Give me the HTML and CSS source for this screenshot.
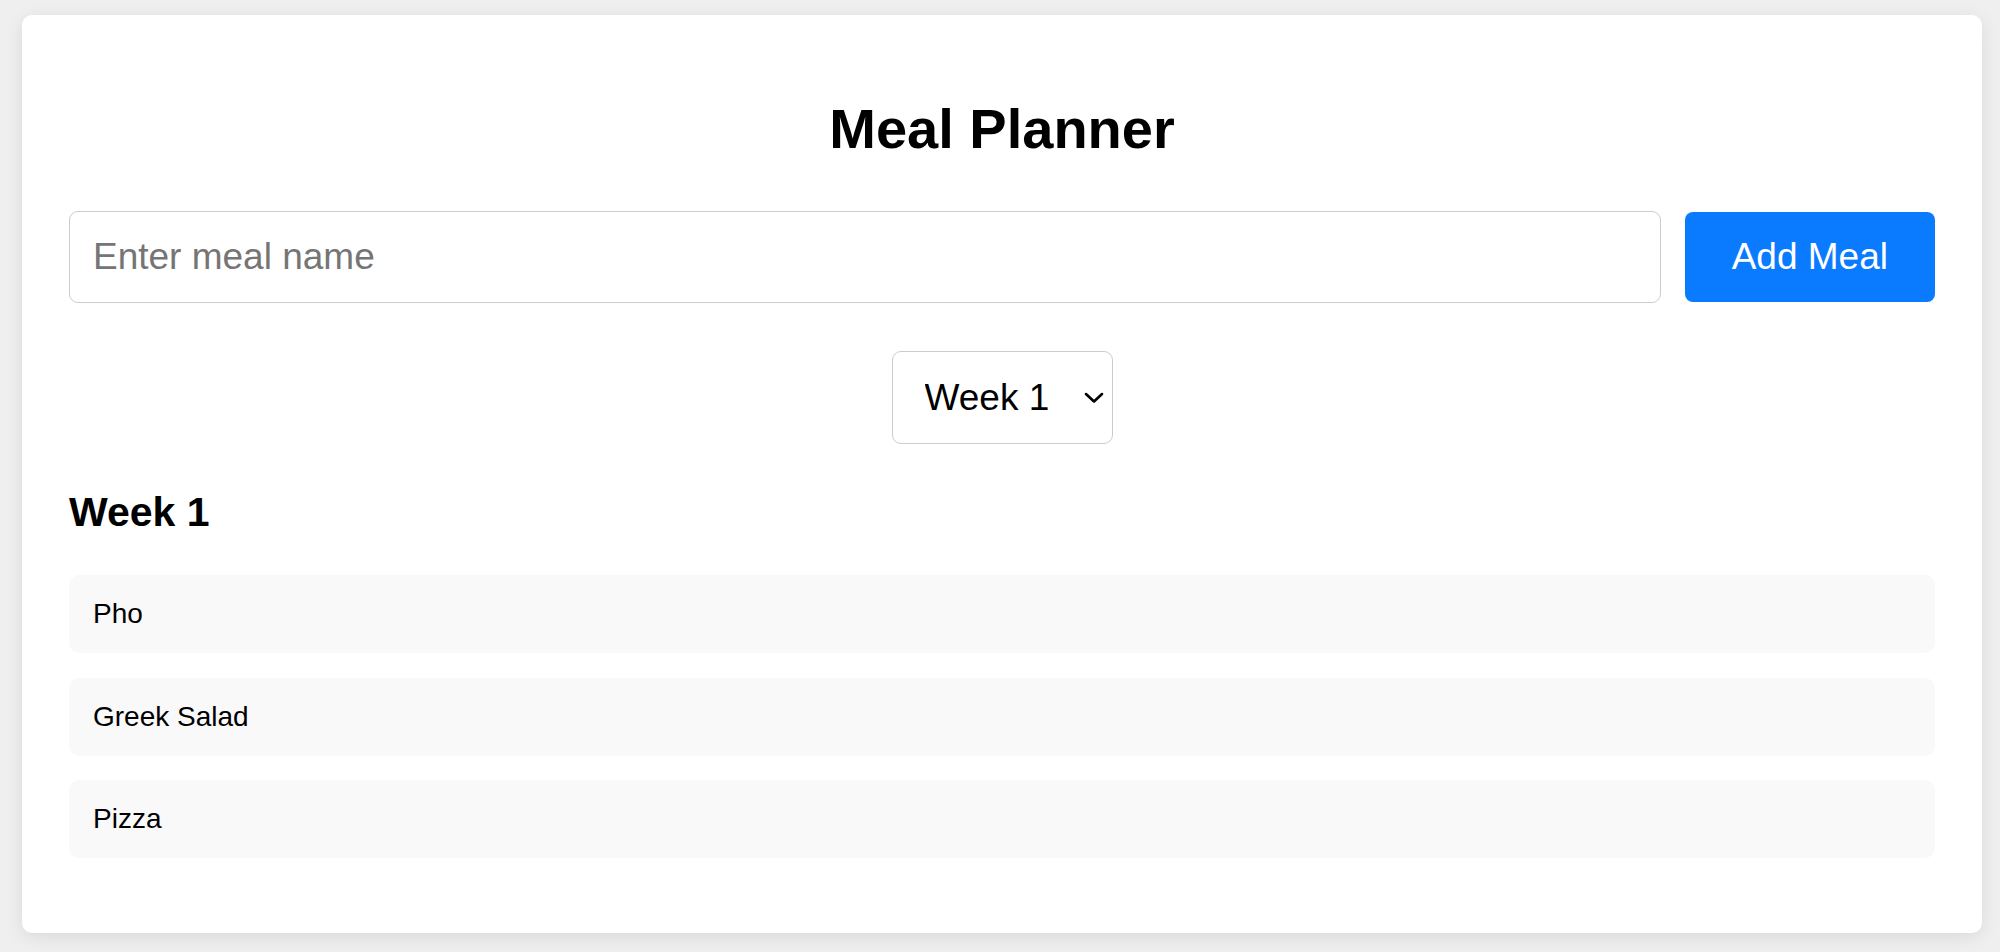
FILE: index.html
```html
<!DOCTYPE html>
<html lang="en">
<head>
<meta charset="utf-8">
<title>Meal Planner</title>
<link rel="stylesheet" href="styles.css">
</head>
<body>
<main class="card">
  <h1 class="title">Meal Planner</h1>
  <div class="add-row">
    <input class="meal-input" type="text" placeholder="Enter meal name">
    <button class="add-btn" type="button">Add Meal</button>
  </div>
  <div class="week-picker">
    <div class="select-wrap">
      <select class="week-select">
        <option>Week 1</option>
        <option>Week 2</option>
        <option>Week 3</option>
        <option>Week 4</option>
      </select>
      <svg class="chevron" width="20" height="11" viewBox="0 0 20 11" aria-hidden="true">
        <path d="M2 1.5 L10 9 L18 1.5" fill="none" stroke="#000" stroke-width="2.6" stroke-linecap="round" stroke-linejoin="round"/>
      </svg>
    </div>
  </div>
  <h2 class="week-title">Week 1</h2>
  <ul class="meal-list">
    <li class="meal-item">Pho</li>
    <li class="meal-item">Greek Salad</li>
    <li class="meal-item">Pizza</li>
  </ul>
</main>
</body>
</html>
```

FILE: styles.css
```css
* {
  box-sizing: border-box;
}

html, body {
  margin: 0;
  height: 100%;
}

body {
  background: #efefef;
  font-family: "Liberation Sans", Arial, Helvetica, sans-serif;
  color: #000;
  padding: 15px 18px 0 22px;
}

.card {
  width: 1960px;
  background: #fff;
  border-radius: 10px;
  box-shadow: 0 4px 18px rgba(0, 0, 0, 0.09);
  padding: 47px 47px 75px 47px;
}

.title {
  margin: 35px 0 50px;
  font-size: 56px;
  line-height: 64px;
  font-weight: 700;
  text-align: center;
}

.add-row {
  display: flex;
  align-items: center;
  gap: 24px;
}

.meal-input {
  flex: 1;
  height: 92px;
  font-family: inherit;
  font-size: 37px;
  line-height: 42px;
  padding: 24px 23px;
  border: 1px solid #cccccc;
  border-radius: 9px;
  color: #000;
  background: #fff;
  outline: none;
}

.meal-input::placeholder {
  color: #757575;
}

.add-btn {
  height: 90px;
  font-family: inherit;
  font-size: 37px;
  line-height: 42px;
  padding: 24px 47px;
  border: none;
  border-radius: 8px;
  background: #0a7bff;
  color: #fff;
  cursor: pointer;
}

.week-picker {
  display: flex;
  justify-content: center;
  margin-top: 48px;
}

.select-wrap {
  position: relative;
  display: inline-flex;
}

.week-select {
  appearance: none;
  -webkit-appearance: none;
  height: 93px;
  font-family: inherit;
  font-size: 37px;
  line-height: 43px;
  padding: 24px 62px 24px 32px;
  border: 1px solid #cccccc;
  border-radius: 9px;
  background: #fff;
  color: #000;
}

.chevron {
  position: absolute;
  right: 9px;
  top: 50%;
  transform: translateY(-50%);
  pointer-events: none;
}

.week-title {
  margin: 45px 0 39px;
  font-size: 41px;
  line-height: 47px;
  font-weight: 700;
}

.meal-list {
  list-style: none;
  margin: 0;
  padding: 0;
  display: flex;
  flex-direction: column;
  gap: 24.7px;
}

.meal-item {
  background: #f9f9f9;
  border-radius: 10px;
  padding: 23px 24px;
  font-size: 28px;
  line-height: 32px;
}
```
